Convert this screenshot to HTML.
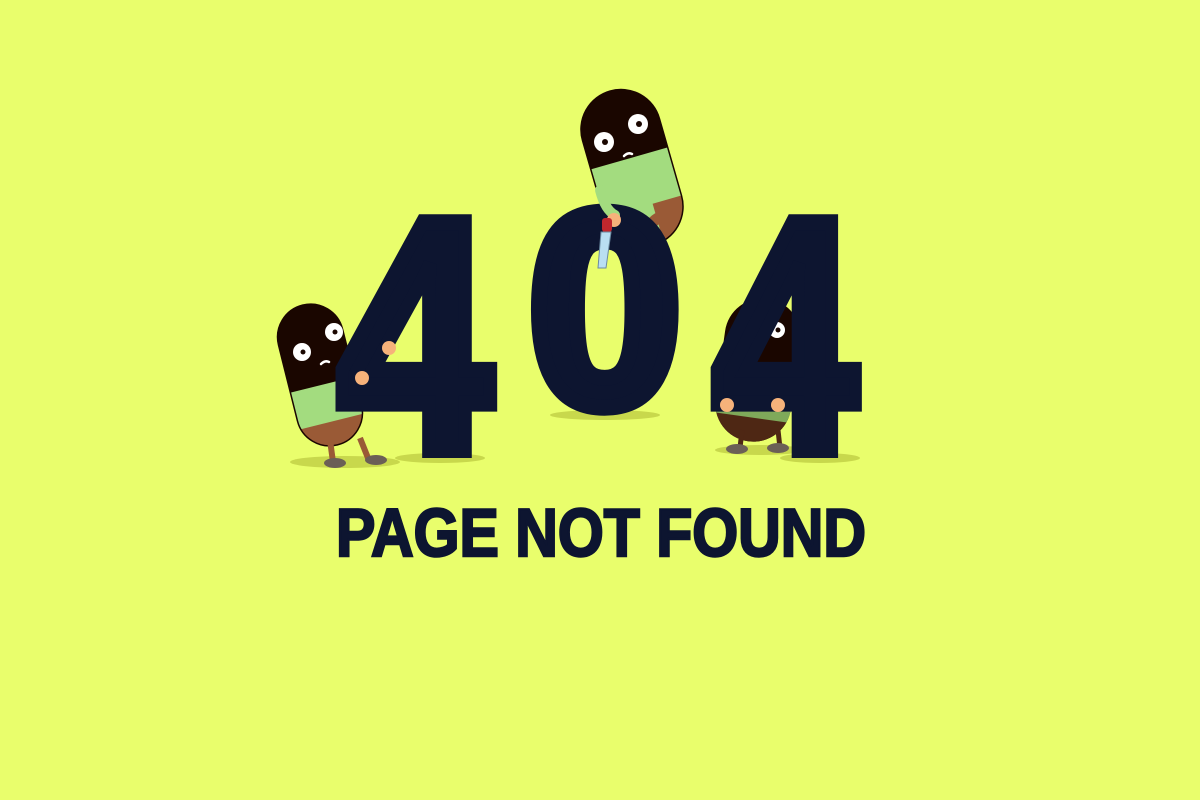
<!DOCTYPE html>
<html><head><meta charset="utf-8"><style>
html,body{margin:0;padding:0;background:#e9fe6c;width:1200px;height:800px;overflow:hidden}
svg{display:block}
</style></head><body>
<svg width="1200" height="800" viewBox="0 0 1200 800">
<defs>
<clipPath id="cap1"><rect x="-33" y="-72" width="66" height="144" rx="33"/></clipPath>
<clipPath id="cap2"><rect x="-40" y="-80" width="80" height="160" rx="40"/></clipPath>
<clipPath id="cap3"><rect x="-38" y="-72" width="76" height="144" rx="38"/></clipPath>
</defs>
<rect width="1200" height="800" fill="#e9fe6c"/>
<ellipse cx="345" cy="462" rx="55" ry="6" fill="#c8d84c"/>
<ellipse cx="440" cy="458" rx="45" ry="5" fill="#c8d84c"/>
<ellipse cx="605" cy="415" rx="55" ry="5" fill="#c8d84c"/>
<ellipse cx="760" cy="450" rx="45" ry="5" fill="#c8d84c"/>
<ellipse cx="820" cy="458" rx="40" ry="5" fill="#c8d84c"/>

<!-- left character -->
<g transform="translate(320,375) rotate(-14)">
  <g clip-path="url(#cap1)">
    <rect x="-40" y="-80" width="80" height="160" fill="#1a0600"/>
    <rect x="-40" y="10" width="80" height="50" fill="#a3dc7f"/>
    <rect x="-40" y="48" width="80" height="40" fill="#9a5a36"/>
  </g>
  <rect x="-33" y="-72" width="66" height="144" rx="33" fill="none" stroke="#1a0600" stroke-width="1.5"/>
</g>
<line x1="330" y1="440" x2="333" y2="462" stroke="#9a5a36" stroke-width="6"/>
<line x1="360" y1="438" x2="368" y2="458" stroke="#9a5a36" stroke-width="6"/>
<ellipse cx="335" cy="463" rx="11" ry="5" fill="#6b5f56"/>
<ellipse cx="376" cy="460" rx="11" ry="5" fill="#6b5f56"/>
<circle cx="302" cy="352" r="9" fill="#fff"/><circle cx="303" cy="352" r="2.5" fill="#1a0600"/>
<circle cx="334" cy="332" r="9" fill="#fff"/><circle cx="335" cy="332" r="2.5" fill="#1a0600"/>
<path d="M321 364 q4 -4 8 -2" stroke="#fff" stroke-width="2.5" fill="none" stroke-linecap="round"/>

<!-- top character -->
<g transform="translate(632,168) rotate(-16)">
  <g clip-path="url(#cap2)">
    <rect x="-50" y="-90" width="100" height="180" fill="#1a0600"/>
    <rect x="-50" y="-10" width="100" height="110" fill="#a3dc7f"/>
    <rect x="10" y="40" width="40" height="60" fill="#9a5a36"/>
  </g>
  <rect x="-40" y="-80" width="80" height="160" rx="40" fill="none" stroke="#1a0600" stroke-width="1.5"/>
</g>
<path d="M665 215 q-15 5 -15 15 q8 10 5 25" stroke="#9a5a36" stroke-width="11" fill="none" stroke-linecap="round"/>
<ellipse cx="655" cy="256" rx="5" ry="8" fill="#6b5f56"/>
<circle cx="604" cy="142" r="10" fill="#fff"/><circle cx="605" cy="142" r="3" fill="#1a0600"/>
<circle cx="638" cy="124" r="10" fill="#fff"/><circle cx="639" cy="124" r="3" fill="#1a0600"/>
<path d="M624 156 q4 -4 8 -2" stroke="#fff" stroke-width="2.5" fill="none" stroke-linecap="round"/>

<!-- right character -->
<g transform="translate(758,370) rotate(8)">
  <g clip-path="url(#cap3)">
    <rect x="-45" y="-80" width="90" height="160" fill="#1a0600"/>
    <rect x="-45" y="35" width="90" height="15" fill="#7fa95a"/>
    <rect x="-45" y="48" width="90" height="40" fill="#4e2714"/>
  </g>
</g>
<circle cx="777" cy="330" r="8" fill="#fff"/><circle cx="778" cy="330" r="2.5" fill="#1a0600"/>
<line x1="742" y1="430" x2="740" y2="448" stroke="#4e2714" stroke-width="5"/>
<line x1="778" y1="430" x2="780" y2="448" stroke="#4e2714" stroke-width="5"/>
<ellipse cx="737" cy="449" rx="11" ry="5" fill="#6b5f56"/>
<ellipse cx="778" cy="448" rx="11" ry="5" fill="#6b5f56"/>

<!-- digits -->
<g font-family="Liberation Sans, sans-serif" font-weight="bold" fill="#0d1530" stroke="#0d1530" stroke-width="16" stroke-linejoin="miter">
<text x="338" y="450" font-size="331" textLength="154" lengthAdjust="spacingAndGlyphs">4</text>
<text x="528" y="405" font-size="277" textLength="154" lengthAdjust="spacingAndGlyphs">0</text>
<text x="713" y="450" font-size="331" textLength="144" lengthAdjust="spacingAndGlyphs">4</text>
</g>

<!-- hands -->
<circle cx="389" cy="348" r="7" fill="#f6b27a"/>
<circle cx="362" cy="378" r="7" fill="#f6b27a"/>
<circle cx="727" cy="405" r="7" fill="#f6b27a"/>
<circle cx="778" cy="405" r="7" fill="#f6b27a"/>
<path d="M600 190 q5 20 15 25" stroke="#a3dc7f" stroke-width="10" fill="none" stroke-linecap="round"/>
<circle cx="614" cy="220" r="7" fill="#f6b27a"/>
<rect x="602" y="218" width="10" height="14" rx="3" fill="#c0272d"/>
<polygon points="601,232 611,232 606,268 598,268" fill="#b9dff2" stroke="#6a8aa0" stroke-width="1"/>

<text x="336" y="556" font-family="Liberation Sans, sans-serif" font-weight="bold" font-size="68" fill="#0d1530" stroke="#0d1530" stroke-width="2.5" textLength="530" lengthAdjust="spacingAndGlyphs">PAGE NOT FOUND</text>
</svg>
</body></html>
